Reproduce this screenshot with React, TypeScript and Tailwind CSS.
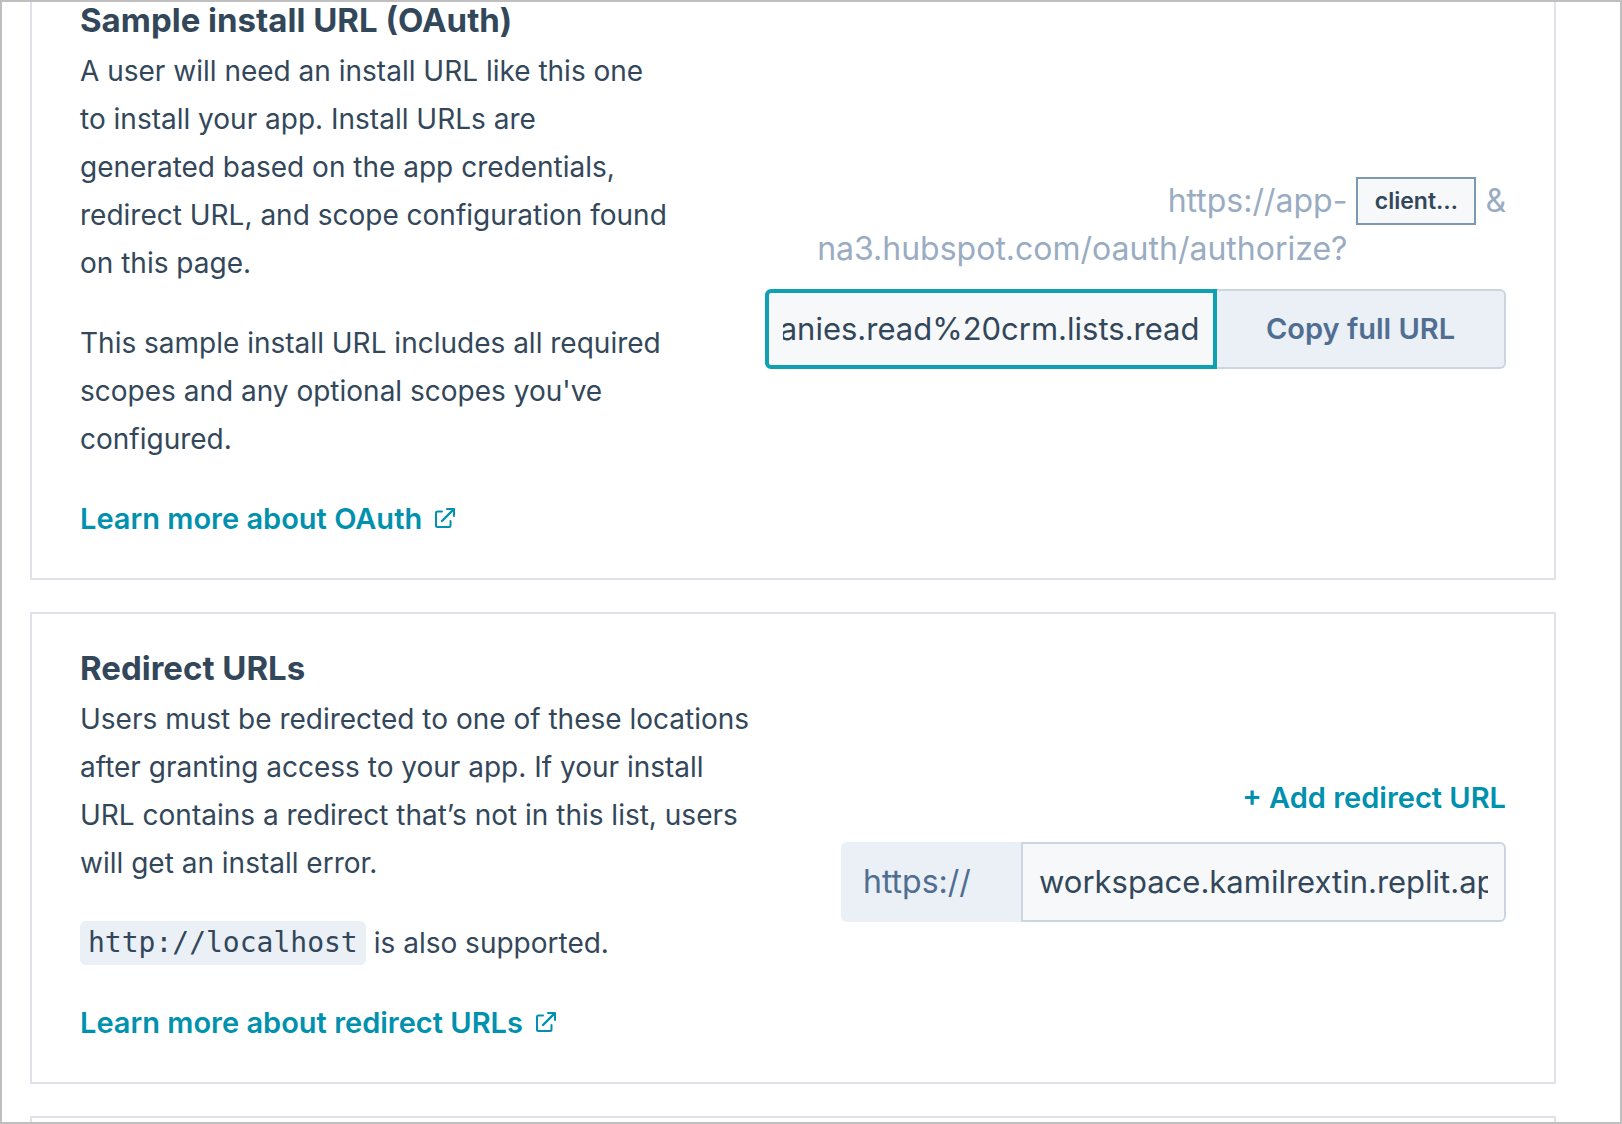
import React, { useLayoutEffect, useRef } from 'react';

function ExternalIcon() {
  return (
    <svg
      viewBox="0 0 22 22"
      className="mb-0.5 h-[22px] w-[22px] shrink-0"
      fill="none"
      stroke="currentColor"
      strokeWidth="2"
      strokeLinecap="round"
      strokeLinejoin="round"
      aria-hidden="true"
    >
      <path d="M8 4.5H3.5A1.5 1.5 0 0 0 2 6v12.5A1.5 1.5 0 0 0 3.5 20H15a1.5 1.5 0 0 0 1.5-1.5V14" />
      <path d="M8 14 19.5 2.5" strokeWidth="2.4" />
      <path d="M13 2h7v7" />
    </svg>
  );
}

function DocLink({ children }: { children: React.ReactNode }) {
  return (
    <a href="#" className="flex h-12 items-center gap-3 text-[29px] font-semibold text-[#0091ae]">
      {children}
      <ExternalIcon />
    </a>
  );
}

type CardProps = {
  title: string;
  description: React.ReactNode;
  note: React.ReactNode;
  linkText: string;
  children: React.ReactNode;
};

function Card({ title, description, note, linkText, children }: CardProps) {
  return (
    <section className="flex items-center justify-between border-2 border-[#dfe3e9] px-12">
      <div className="flex shrink-0 flex-col gap-8 pt-[30px] pb-[35px]">
        <div>
          <h2 className="mb-[3px] text-[33px] leading-[48px] font-bold">{title}</h2>
          <p>{description}</p>
        </div>
        {note}
        <DocLink>{linkText}</DocLink>
      </div>
      {children}
    </section>
  );
}

function InstallUrlCard() {
  const input = useRef<HTMLInputElement>(null);

  // Show the end of the URL, where the scopes are.
  useLayoutEffect(() => {
    if (input.current) input.current.scrollLeft = input.current.scrollWidth;
  }, []);

  return (
    <Card
      title="Sample install URL (OAuth)"
      description={
        <>
          A user will need an install URL like this one
          <br />
          to install your app. Install URLs are
          <br />
          generated based on the app credentials,
          <br />
          redirect URL, and scope configuration found
          <br />
          on this page.
        </>
      }
      note={
        <p>
          This sample install URL includes all required
          <br />
          scopes and any optional scopes you've
          <br />
          configured.
        </p>
      }
      linkText="Learn more about OAuth"
    >
      <div className="flex w-[741px] flex-col gap-4 pt-0.5">
        <div className="flex items-start justify-end gap-[9px] text-[32px] text-[#99acc2]">
          <span className="text-right">
            https://app-
            <br />
            na3.hubspot.com/oauth/authorize?
          </span>
          <span className="flex h-12 w-[120px] items-center justify-center border-2 border-[#7c98b6] bg-[#f6f8fa] text-[23px] font-semibold text-[#33475b]">
            client…
          </span>
          <span>&amp;</span>
        </div>
        <div className="flex h-20">
          <input
            ref={input}
            aria-label="Sample install URL"
            readOnly
            defaultValue="crm.objects.companies.read%20crm.lists.read"
            className="min-w-0 flex-1 rounded-l-md border-4 border-[#0fa0b4] bg-[#f6f8fa] px-[14px] text-[31px] outline-none"
          />
          <button
            type="button"
            className="w-[289px] rounded-r-md border-2 border-l-0 border-[#cbd6e2] bg-[#eaf0f6] text-[29px] font-semibold text-[#506e91]"
          >
            Copy full URL
          </button>
        </div>
      </div>
    </Card>
  );
}

function RedirectUrlsCard() {
  return (
    <Card
      title="Redirect URLs"
      description={
        <>
          Users must be redirected to one of these locations
          <br />
          after granting access to your app. If your install
          <br />
          URL contains a redirect that’s not in this list, users
          <br />
          will get an install error.
        </>
      }
      note={
        <p className="flex items-center gap-2">
          <code className="flex h-11 items-center rounded-md bg-[#eaf0f6] px-2 font-['DejaVu_Sans_Mono',monospace] text-[28px]">
            http://localhost
          </code>
          is also supported.
        </p>
      }
      linkText="Learn more about redirect URLs"
    >
      <div className="flex w-[665px] flex-col items-end gap-5">
        <button type="button" className="h-12 text-[29px] font-semibold text-[#0091ae]">
          + Add redirect URL
        </button>
        <div className="flex h-20 w-full">
          <label
            htmlFor="redirect-url"
            className="flex w-[180px] items-center rounded-l-md bg-[#eaf0f6] pl-[22px] text-[32px] text-[#506e91]"
          >
            https://
          </label>
          <input
            id="redirect-url"
            defaultValue="workspace.kamilrextin.replit.app"
            className="min-w-0 flex-1 rounded-r-md border-2 border-[#cbd6e2] bg-[#f6f8fa] px-4 text-[31px] outline-none"
          />
        </div>
      </div>
    </Card>
  );
}

export default function App() {
  return (
    <main className="h-screen overflow-hidden border-2 border-[#bfbfbf] bg-white pr-16 pl-7 font-['Inter',sans-serif] text-[28px] leading-[48px] text-[#33475b]">
      <div className="-mt-[38px] flex flex-col gap-8">
        <InstallUrlCard />
        <RedirectUrlsCard />
        <section className="h-40 border-2 border-[#dfe3e9]" />
      </div>
    </main>
  );
}
